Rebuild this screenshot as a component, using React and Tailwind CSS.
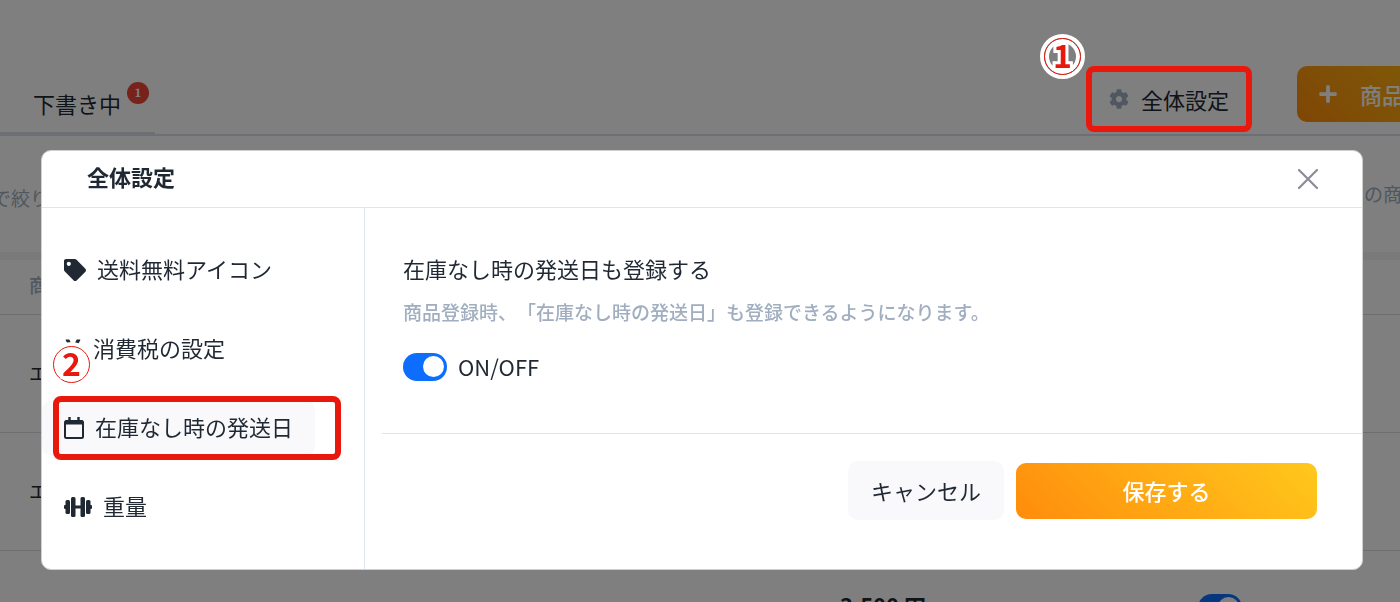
import { useState } from "react";
import { FaCog, FaPlus, FaTag, FaYenSign } from "react-icons/fa";

const MENU = [
  { id: "shipping", label: "送料無料アイコン", icon: TagIcon },
  { id: "tax", label: "消費税の設定", icon: YenIcon },
  { id: "stock", label: "在庫なし時の発送日", icon: CalendarIcon },
  { id: "weight", label: "重量", icon: DumbbellIcon },
];

const ROWS = [
  { id: 1, name: "エ" },
  { id: 2, name: "エ" },
];

function TagIcon() {
  return <FaTag className="size-[22px]" />;
}

function YenIcon() {
  return <FaYenSign className="h-[22px] w-[18px]" />;
}

function CalendarIcon() {
  return (
    <svg className="h-[22px] w-5" viewBox="0 0 20 22" fill="none" stroke="currentColor" strokeWidth="2">
      <rect x="1" y="4" width="18" height="17" rx="1.5" />
      <path d="M1 5.5h18" strokeWidth="4" />
      <path d="M5.5 0v5M14.5 0v5" strokeWidth="2.4" />
    </svg>
  );
}

function DumbbellIcon() {
  return (
    <svg className="h-5 w-7" viewBox="0 0 28 20" fill="currentColor">
      <rect x="0" y="8" width="3" height="4" rx="1" />
      <rect x="1.5" y="3" width="4.5" height="14" rx="1.5" />
      <rect x="7" y="0" width="4.5" height="20" rx="1.5" />
      <rect x="11" y="8.5" width="6" height="3" />
      <rect x="16.5" y="0" width="4.5" height="20" rx="1.5" />
      <rect x="22" y="3" width="4.5" height="14" rx="1.5" />
      <rect x="25" y="8" width="3" height="4" rx="1" />
    </svg>
  );
}

function Switch({ label, checked, onChange, children }) {
  return (
    <label className="inline-flex cursor-pointer items-center gap-[11px]">
      <input type="checkbox" role="switch" aria-label={label} checked={checked} onChange={onChange} className="peer sr-only" />
      <span className="flex h-7 w-11 items-center rounded-full bg-gray-300 px-[3px] peer-checked:justify-end peer-checked:bg-[#0d6efd]">
        <span className="size-[21px] rounded-full bg-white" />
      </span>
      {children}
    </label>
  );
}

// Numbered step with a white halo around the ring and the digit
function Marker({ className, children }) {
  return (
    <span className={`flex items-center justify-center rounded-full border-4 border-white ${className}`}>
      <span className="flex size-[37px] items-center justify-center rounded-full border border-[#e8190c] pb-1.5 text-[32px] leading-none font-bold text-[#e8190c] inset-shadow-[0_0_0_4px_white] [-webkit-text-stroke:6px_white] [paint-order:stroke]">
        {children}
      </span>
    </span>
  );
}

function PageHeader() {
  return (
    <header className="flex items-stretch border-b-2 border-[#d9dfe9] pt-[66px]">
      <a href="#draft" className="-mb-0.5 flex w-[155px] items-center border-b-4 border-[#d9dfe9] pt-2 pl-[33px] text-[22px]">
        <span className="relative">
          下書き中
          <span className="absolute -top-[5px] -right-7 flex size-[22px] items-center justify-center rounded-full bg-[#f04438] font-serif text-xs font-bold text-white">
            1
          </span>
        </span>
      </a>
      <div className="ml-auto flex items-start gap-[45px] pb-0.5">
        <button type="button" className="relative flex h-[66px] w-[166px] items-center justify-center gap-3 text-[22px]">
          <FaCog className="size-5 text-[#a0aec0]" />
          全体設定
          <span className="absolute inset-0 z-50 rounded-lg border-[6px] border-[#e8190c]" />
          <Marker className="absolute -top-8 -left-[46px] z-50">1</Marker>
        </button>
        <button
          type="button"
          className="flex h-14 w-[103px] items-center gap-[22px] rounded-l-[10px] bg-linear-45 from-[#ff8c0c] to-[#ffb010] pl-[21px] text-[22px] font-medium whitespace-nowrap text-white"
        >
          <FaPlus className="size-5 shrink-0" />
          商品
        </button>
      </div>
    </header>
  );
}

function ProductTable() {
  const [published, setPublished] = useState(true);

  return (
    <table className="w-full text-left text-[19px]">
      <thead>
        <tr className="h-[54px] border-b border-[#d9dce2] text-[#a0aec0]">
          <th className="pb-1 pl-[29px] font-medium" colSpan={3}>商</th>
        </tr>
      </thead>
      <tbody>
        {ROWS.map((row) => (
          <tr key={row.id} className="h-[118px] border-b border-[#d9dce2]">
            <td className="pl-[29px]" colSpan={3}>{row.name}</td>
          </tr>
        ))}
        <tr className="h-[118px]">
          <td className="w-3/5" />
          <td className="pb-2 text-[22px] font-bold">3,500 円</td>
          <td className="w-[202px]">
            <Switch label="公開" checked={published} onChange={() => setPublished(!published)} />
          </td>
        </tr>
      </tbody>
    </table>
  );
}

function SettingsDialog() {
  const [active, setActive] = useState("stock");
  const [enabled, setEnabled] = useState(true);

  return (
    <div role="dialog" aria-labelledby="dialog-title" className="w-full overflow-hidden rounded-[10px] border border-[#d0d0d0] bg-white">
      <div className="flex h-[57px] items-center justify-between border-b border-[#dfe5ee] pr-11 pl-[45px]">
        <h2 id="dialog-title" className="pb-1.5 text-[22px] font-semibold">全体設定</h2>
        <button type="button" aria-label="閉じる" className="text-[#8b8c98]">
          <svg className="size-5" viewBox="0 0 20 20" fill="none" stroke="currentColor" strokeWidth="2.2" strokeLinecap="round">
            <path d="M1 1l18 18M19 1L1 19" />
          </svg>
        </button>
      </div>
      <div className="flex">
        <nav className="flex w-[323px] shrink-0 flex-col gap-[23px] border-r border-[#dfe5ee] py-[34px]">
          {MENU.map((item) => {
            const Icon = item.icon;
            const selected = item.id === active;
            return (
              <button
                key={item.id}
                type="button"
                onClick={() => setActive(item.id)}
                className={`relative flex h-14 w-[273px] items-center gap-[11px] rounded-[10px] pl-[22px] text-[22px] ${selected ? "bg-[#f9f9fc]" : ""}`}
              >
                <Icon />
                <span className="pb-[3px]">{item.label}</span>
                {item.id === "stock" && (
                  <>
                    <span className="absolute -top-1 -right-[26px] -bottom-1 left-[11px] rounded-lg border-[6px] border-[#e8190c]" />
                    <Marker className="absolute -top-[58px] left-[7px] bg-white">2</Marker>
                  </>
                )}
              </button>
            );
          })}
        </nav>
        <section className="flex-1 pt-[42px] pl-[17px]">
          <div className="border-b border-[#dfe5ee] pb-[50px] pl-[21px]">
            <h3 className="text-[22px] leading-9">在庫なし時の発送日も登録する</h3>
            <p className="mt-2.5 text-[19px] leading-8 font-medium text-[#a0aec0] [text-spacing-trim:space-all]">
              商品登録時、「在庫なし時の発送日」も登録できるようになります。
            </p>
            <div className="mt-[22px] flex text-[22px]">
              <Switch label="ON/OFF" checked={enabled} onChange={() => setEnabled(!enabled)}>ON/OFF</Switch>
            </div>
          </div>
          <div className="flex items-center justify-end gap-3 pt-[27px] pr-[45px]">
            <button type="button" className="h-[59px] w-[156px] rounded-[10px] bg-[#f9f9fc] text-[22px]">キャンセル</button>
            <button type="button" className="h-14 w-[301px] rounded-[10px] bg-linear-45 from-[#ff8c0c] to-[#ffc81c] text-[22px] font-medium text-white">
              保存する
            </button>
          </div>
        </section>
      </div>
    </div>
  );
}

export default function App() {
  return (
    <div className="relative h-screen overflow-hidden bg-white font-['Noto_Sans_CJK_JP',sans-serif] text-[#1f2833]">
      <PageHeader />
      <div className="flex h-[116px] items-center justify-between text-[19px] text-[#a0aec0]">
        <span className="-ml-2 pt-2">で絞り</span>
        <span className="-mr-0.5">間の商</span>
      </div>
      <div className="h-2 bg-[#f5f5f8]" />
      <ProductTable />
      <div className="fixed inset-0 z-40 bg-black/50 pt-[150px] pr-[37px] pl-[41px]">
        <SettingsDialog />
      </div>
    </div>
  );
}
